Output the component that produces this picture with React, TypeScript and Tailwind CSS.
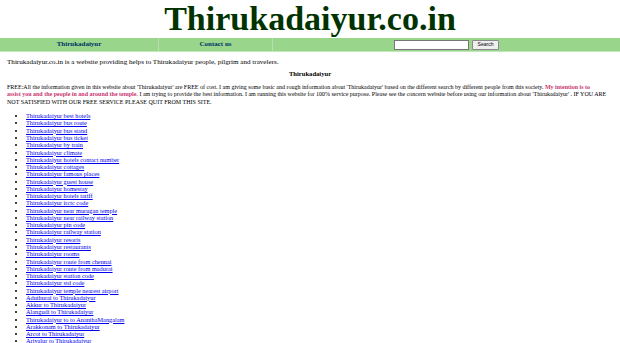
import React from "react";

const links = [
  "Thirukadaiyur best hotels",
  "Thirukadaiyur bus route",
  "Thirukadaiyur bus stand",
  "Thirukadaiyur bus ticket",
  "Thirukadaiyur by train",
  "Thirukadaiyur climate",
  "Thirukadaiyur hotels contact number",
  "Thirukadaiyur cottages",
  "Thirukadaiyur famous places",
  "Thirukadaiyur guest house",
  "Thirukadaiyur homestay",
  "Thirukadaiyur hotels tariff",
  "Thirukadaiyur irctc code",
  "Thirukadaiyur near murugan temple",
  "Thirukadaiyur near railway station",
  "Thirukadaiyur pin code",
  "Thirukadaiyur railway station",
  "Thirukadaiyur resorts",
  "Thirukadaiyur restaurants",
  "Thirukadaiyur rooms",
  "Thirukadaiyur route from chennai",
  "Thirukadaiyur route from madurai",
  "Thirukadaiyur station code",
  "Thirukadaiyur std code",
  "Thirukadaiyur temple nearest airport",
  "Aduthurai to Thirukadaiyur",
  "Akkur to Thirukadaiyur",
  "Alangudi to Thirukadaiyur",
  "Thirukadaiyur to to AnanthaMangalam",
  "Arakkonam to Thirukadaiyur",
  "Arcot to Thirukadaiyur",
  "Ariyalur to Thirukadaiyur",
];

export default function App() {
  return (
    <div className="w-[620px] h-[343px] overflow-hidden bg-white text-black font-['Liberation_Serif','Times_New_Roman',serif]">
      <div className="h-[38px] text-center text-[34px] leading-[37px] font-bold text-[#003300]">
        Thirukadaiyur.co.in
      </div>
      <div className="flex h-[14px] bg-[#99d58a] border-b border-[#c4e6bb]">
        <div className="w-[158px] flex items-center justify-center text-[7px] font-bold text-[#003366]">
          Thirukadaiyur
        </div>
        <div className="w-px bg-[#b9dfb0]" />
        <div className="w-[113px] flex items-center justify-center text-[7px] font-bold text-[#003366]">
          Contact us
        </div>
        <div className="w-px bg-[#b9dfb0]" />
        <div className="flex-1 flex items-center justify-center gap-[3px]">
          <div className="w-[75px] h-[10px] bg-white border border-[#777]" />
          <div className="w-[27px] h-[10px] bg-[#efefef] border border-[#888] rounded-[1px] flex items-center justify-center text-[5px] leading-none font-['Liberation_Sans',Arial,sans-serif]">
            Search
          </div>
        </div>
      </div>
      <div className="px-[7px]">
        <p className="mt-[7px] text-[7.1px] leading-[7.36px]">
          Thirukadaiyur.co.in is a website providing helps to Thirukadaiyur people, pilgrim and travelers.
        </p>
        <p className="mt-[4px] text-center font-bold text-[6.6px] leading-[7.36px]">Thirukadaiyur</p>
        <p className="mt-[6px] whitespace-nowrap text-[6px] leading-[7.5px]">
          FREE:All the information given in this website about 'Thirukadaiyur' are FREE of cost. I am giving some basic and rough information about 'Thirukadaiyur' based on the different search by different people from this society.{" "}
          <span className="font-bold text-[#c8336e]">My intention is to</span>
          <br />
          <span className="font-bold text-[#c8336e]">assist you and the people in and around the temple.</span> I am trying to provide the best information. I am running this website for 100% service purpose. Please see the concern website before using our information about 'Thirukadaiyur' . IF YOU ARE
          <br />
          NOT SATISFIED WITH OUR FREE SERVICE PLEASE QUIT FROM THIS SITE.
        </p>
        <ul className="mt-[6px] list-disc pl-[19px] text-[6.3px] leading-[7.27px]">
          {links.map((l) => (
            <li key={l}>
              <a href="#" className="text-[#0000ee] underline">
                {l}
              </a>
            </li>
          ))}
        </ul>
      </div>
    </div>
  );
}
